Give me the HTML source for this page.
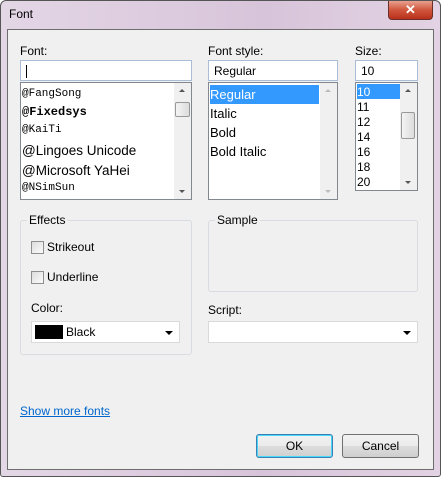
<!DOCTYPE html>
<html><head><meta charset="utf-8"><style>
*{box-sizing:border-box;margin:0;padding:0}
body{width:441px;height:477px;overflow:hidden;font-family:"Liberation Sans",sans-serif;font-size:12px;color:#000;background:#fff}
.win{position:absolute;left:0;top:0;width:441px;height:477px;background:linear-gradient(90deg,#e3d6e5,#d8c4da 60%,#e2d2e3);border:1px solid #555;border-radius:6px 6px 3px 3px}
.title{position:absolute;left:8px;top:6px;font-size:12px;color:#000}
.close{position:absolute;left:387px;top:0;width:45px;height:19px;background:linear-gradient(#e8a090,#d0563c 50%,#b8301c);border:1px solid #6a3028;border-top:none;border-radius:0 0 4px 4px;color:#fff;font-weight:bold;font-size:13px;text-align:center;line-height:18px}
.client{position:absolute;left:7px;top:29px;width:427px;height:441px;background:#f0f0f0;border:1px solid #6d6d6d}
.a{position:absolute}
.lbl{position:absolute;font-size:12px}
.inp{position:absolute;background:#fff;border:1px solid #a9bed6;height:21px;padding:3px 0 0 5px;font-size:12px}
.list{position:absolute;background:#fff;border:1px solid #828790;overflow:hidden}
.sb{position:absolute;right:0;top:0;bottom:0;width:17px;background:#f0f0f0}
.row{position:absolute;left:1px;white-space:nowrap}
.grp{position:absolute;border:1px solid #d8dce0;border-radius:3px}
.glbl{position:absolute;background:#f0f0f0;padding:0 2px}
.chk{position:absolute;width:13px;height:13px;border:1px solid #8e8f8f;background:linear-gradient(135deg,#ddd,#fbfbfb)}
.combo{position:absolute;background:#fff;border:1px solid #d9d9d9;height:22px}
.arr{position:absolute;right:6px;top:9px;width:0;height:0;border-left:4px solid transparent;border-right:4px solid transparent;border-top:4px solid #000}
.btn{position:absolute;height:24px;border:1px solid #707070;border-radius:3px;background:linear-gradient(#f2f2f2,#ebebeb 50%,#dddddd 51%,#cfcfcf);text-align:center;line-height:22px}
</style></head><body>
<div class="win">
<div class="title">Font</div>
<div class="close">✕</div>
</div>
<div class="client"></div>

<div class="lbl" style="left:20px;top:44px">Font:</div>
<div class="inp" style="left:20px;top:60px;width:172px"><span style="display:inline-block;width:1px;height:13px;background:#000;margin-top:1px"></span></div>
<div class="list" style="left:20px;top:82px;width:172px;height:118px">
 <div class="row" style="top:5px;font-family:'Liberation Mono',monospace;font-size:11px">@FangSong</div>
 <div class="row" style="top:22px;font-family:'Liberation Mono',monospace;font-weight:bold;font-size:12px">@Fixedsys</div>
 <div class="row" style="top:41px;font-family:'Liberation Mono',monospace;font-size:11px">@KaiTi</div>
 <div class="row" style="top:60px;font-size:13.5px">@Lingoes Unicode</div>
 <div class="row" style="top:80px;font-size:13.5px">@Microsoft YaHei</div>
 <div class="row" style="top:99px;font-family:'Liberation Mono',monospace;font-size:11px">@NSimSun</div>
 <div class="sb"><div class="a" style="left:5px;top:6px;border-left:3px solid transparent;border-right:3px solid transparent;border-bottom:3px solid #555"></div>
 <div class="a" style="left:1px;top:19px;width:15px;height:15px;border:1px solid #999;background:linear-gradient(90deg,#f4f4f4,#dcdcdc);border-radius:2px"></div>
 <div class="a" style="left:5px;bottom:6px;border-left:3px solid transparent;border-right:3px solid transparent;border-top:3px solid #555"></div></div>
</div>

<div class="lbl" style="left:208px;top:44px">Font style:</div>
<div class="inp" style="left:208px;top:60px;width:130px">Regular</div>
<div class="list" style="left:208px;top:82px;width:130px;height:118px;font-size:13px">
 <div class="a" style="left:1px;top:2px;width:109px;height:19px;background:#3399ff"></div>
 <div class="row" style="top:4px;color:#fff">Regular</div>
 <div class="row" style="top:23px">Italic</div>
 <div class="row" style="top:42px">Bold</div>
 <div class="row" style="top:61px">Bold Italic</div>
 <div class="sb"><div class="a" style="left:5px;top:6px;border-left:3px solid transparent;border-right:3px solid transparent;border-bottom:3px solid #bbb"></div>
 <div class="a" style="left:5px;bottom:6px;border-left:3px solid transparent;border-right:3px solid transparent;border-top:3px solid #bbb"></div></div>
</div>

<div class="lbl" style="left:355px;top:44px">Size:</div>
<div class="inp" style="left:355px;top:60px;width:63px">10</div>
<div class="list" style="left:355px;top:82px;width:63px;height:109px">
 <div class="a" style="left:1px;top:1px;width:43px;height:15px;background:#3399ff"></div>
 <div class="row" style="top:2px;color:#fff">10</div>
 <div class="row" style="top:17px">11</div>
 <div class="row" style="top:32px">12</div>
 <div class="row" style="top:47px">14</div>
 <div class="row" style="top:62px">16</div>
 <div class="row" style="top:77px">18</div>
 <div class="row" style="top:92px">20</div>
 <div class="sb"><div class="a" style="left:5px;top:6px;border-left:3px solid transparent;border-right:3px solid transparent;border-bottom:3px solid #555"></div>
 <div class="a" style="left:1px;top:29px;width:14px;height:27px;border:1px solid #999;background:linear-gradient(90deg,#f4f4f4,#dcdcdc);border-radius:2px"></div>
 <div class="a" style="left:5px;bottom:6px;border-left:3px solid transparent;border-right:3px solid transparent;border-top:3px solid #555"></div></div>
</div>

<div class="grp" style="left:20px;top:220px;width:172px;height:135px"></div>
<div class="glbl" style="left:27px;top:213px">Effects</div>
<div class="chk" style="left:31px;top:241px"></div><div class="lbl" style="left:47px;top:240px">Strikeout</div>
<div class="chk" style="left:31px;top:271px"></div><div class="lbl" style="left:47px;top:270px">Underline</div>
<div class="lbl" style="left:31px;top:301px">Color:</div>
<div class="combo" style="left:31px;top:321px;width:149px"><div class="a" style="left:3px;top:3px;width:28px;height:14px;background:#000"></div><div class="a" style="left:34px;top:3px">Black</div><div class="arr"></div></div>

<div class="grp" style="left:208px;top:220px;width:210px;height:72px"></div>
<div class="glbl" style="left:215px;top:213px">Sample</div>
<div class="lbl" style="left:208px;top:303px">Script:</div>
<div class="combo" style="left:208px;top:321px;width:210px"><div class="arr"></div></div>

<div class="lbl" style="left:20px;top:404px;color:#0066cc;text-decoration:underline">Show more fonts</div>
<div class="btn" style="left:256px;top:434px;width:77px;border-color:#3c7fb1;box-shadow:inset 0 0 0 1px #48d8fb">OK</div>
<div class="btn" style="left:342px;top:434px;width:77px">Cancel</div>
</body></html>
